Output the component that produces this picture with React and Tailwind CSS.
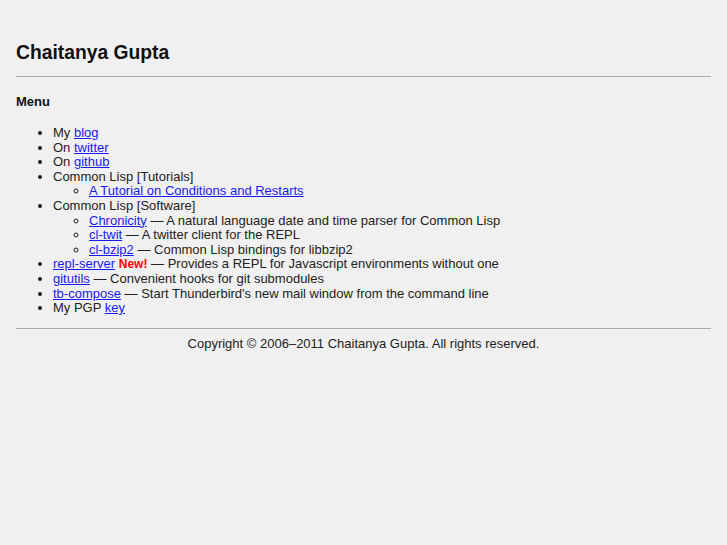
export default function App() {
  const link = 'text-[#1a1aee] underline'
  return (
    <div className="min-h-[545px] bg-[#f0f0f0] px-4 pt-[41px] text-[#222] text-[13px] leading-[14.6px] font-['Liberation_Sans',Arial,sans-serif]">
      <h1 className="text-[19.3px] leading-[24px] font-bold text-[#111]">
        Chaitanya Gupta
      </h1>
      <hr className="mt-[11px] border-t border-[#aaa]" />

      <h2 className="mt-[17px] text-[13px] leading-[16px] font-bold text-[#111]">
        Menu
      </h2>

      <ul className="mt-[16px] pl-[37px] list-disc">
        <li>My <a href="#" className={link}>blog</a></li>
        <li>On <a href="#" className={link}>twitter</a></li>
        <li>On <a href="#" className={link}>github</a></li>
        <li>
          Common Lisp [Tutorials]
          <ul className="pl-[36px] list-[circle]">
            <li><a href="#" className={link}>A Tutorial on Conditions and Restarts</a></li>
          </ul>
        </li>
        <li>
          Common Lisp [Software]
          <ul className="pl-[36px] list-[circle]">
            <li><a href="#" className={link}>Chronicity</a> — A natural language date and time parser for Common Lisp</li>
            <li><a href="#" className={link}>cl-twit</a> — A twitter client for the REPL</li>
            <li><a href="#" className={link}>cl-bzip2</a> — Common Lisp bindings for libbzip2</li>
          </ul>
        </li>
        <li>
          <a href="#" className={link}>repl-server</a>{' '}
          <span className="font-bold text-[#f00] text-[12px]">New!</span>{' '}
          — Provides a REPL for Javascript environments without one
        </li>
        <li><a href="#" className={link}>gitutils</a> — Convenient hooks for git submodules</li>
        <li><a href="#" className={link}>tb-compose</a> — Start Thunderbird's new mail window from the command line</li>
        <li>My PGP <a href="#" className={link}>key</a></li>
      </ul>

      <hr className="mt-[12px] border-t border-[#aaa]" />
      <p className="mt-[7px] text-center text-[13px] leading-[16px] text-[#222]">
        Copyright © 2006–2011 Chaitanya Gupta. All rights reserved.
      </p>
    </div>
  )
}
